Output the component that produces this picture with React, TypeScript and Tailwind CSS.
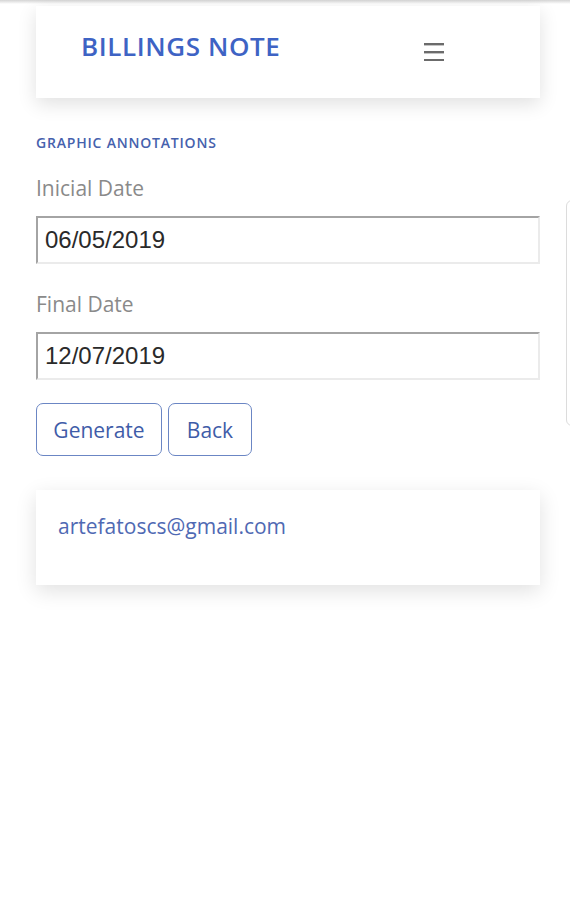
import React from "react";

export default function App() {
  return (
    <div
      className="relative min-h-[900px] w-[570px] overflow-hidden bg-white"
      style={{ fontFamily: "'Open Sans', Lato, sans-serif" }}
    >
      <div className="h-[4px] w-full bg-gradient-to-b from-[#d4d4d4] to-white" />
      <div className="ml-[36px] mr-[30px] mt-[2px] flex h-[92px] items-start justify-between bg-white pl-[45px] pr-[96px] pt-[25px] shadow-[0_6px_18px_rgba(0,0,0,0.12)]">
        <span className="text-[26px] font-semibold leading-[30px] tracking-[0.6px] text-[#3e63c4]">BILLINGS NOTE</span>
        <svg width="20" height="18" viewBox="0 0 20 18" className="mt-[12px]">
          <rect x="0" y="0" width="20" height="2.4" fill="#6b6b6b" />
          <rect x="0" y="8" width="20" height="2.4" fill="#6b6b6b" />
          <rect x="0" y="16" width="20" height="2.4" fill="#6b6b6b" />
        </svg>
      </div>

      <div className="pl-[36px] pr-[30px]">
        <div className="mt-[37px] text-[14px] font-semibold leading-[16px] tracking-[0.8px] text-[#4661ad]">
          GRAPHIC ANNOTATIONS
        </div>
        <div className="mt-[24px] text-[21px] leading-[26px] text-[#8a8a8a]">Inicial Date</div>
        <div
          className="mt-[15px] flex h-[48px] items-center border-[2px] border-t-[#a4a4a4] border-l-[#a4a4a4] border-r-[#ebebeb] border-b-[#ebebeb] pl-[7px] text-[24px] text-[#2a2a2a]"
          style={{ fontFamily: "'Liberation Sans', Arial, sans-serif" }}
        >
          06/05/2019
        </div>
        <div className="mt-[27px] text-[21px] leading-[26px] text-[#8a8a8a]">Final Date</div>
        <div
          className="mt-[15px] flex h-[48px] items-center border-[2px] border-t-[#a4a4a4] border-l-[#a4a4a4] border-r-[#ebebeb] border-b-[#ebebeb] pl-[7px] text-[24px] text-[#2a2a2a]"
          style={{ fontFamily: "'Liberation Sans', Arial, sans-serif" }}
        >
          12/07/2019
        </div>
        <div className="mt-[23px] flex gap-[6px]">
          <button className="flex h-[53px] w-[126px] items-center justify-center rounded-[7px] border border-[#6b86c4] text-[21px] leading-[26px] text-[#3f5ca8]">
            Generate
          </button>
          <button className="flex h-[53px] w-[84px] items-center justify-center rounded-[7px] border border-[#6b86c4] text-[21px] leading-[26px] text-[#3f5ca8]">
            Back
          </button>
        </div>
      </div>

      <div className="ml-[36px] mr-[30px] mt-[34px] h-[95px] bg-white pl-[22px] pt-[22px] shadow-[0_6px_20px_rgba(0,0,0,0.12)]">
        <span className="text-[21px] leading-[28px] text-[#4f69b3]">artefatoscs@gmail.com</span>
      </div>

      <div className="absolute left-[566px] top-[200px] h-[226px] w-[40px] rounded-[6px] border border-[#dcdcdc]" />
    </div>
  );
}
